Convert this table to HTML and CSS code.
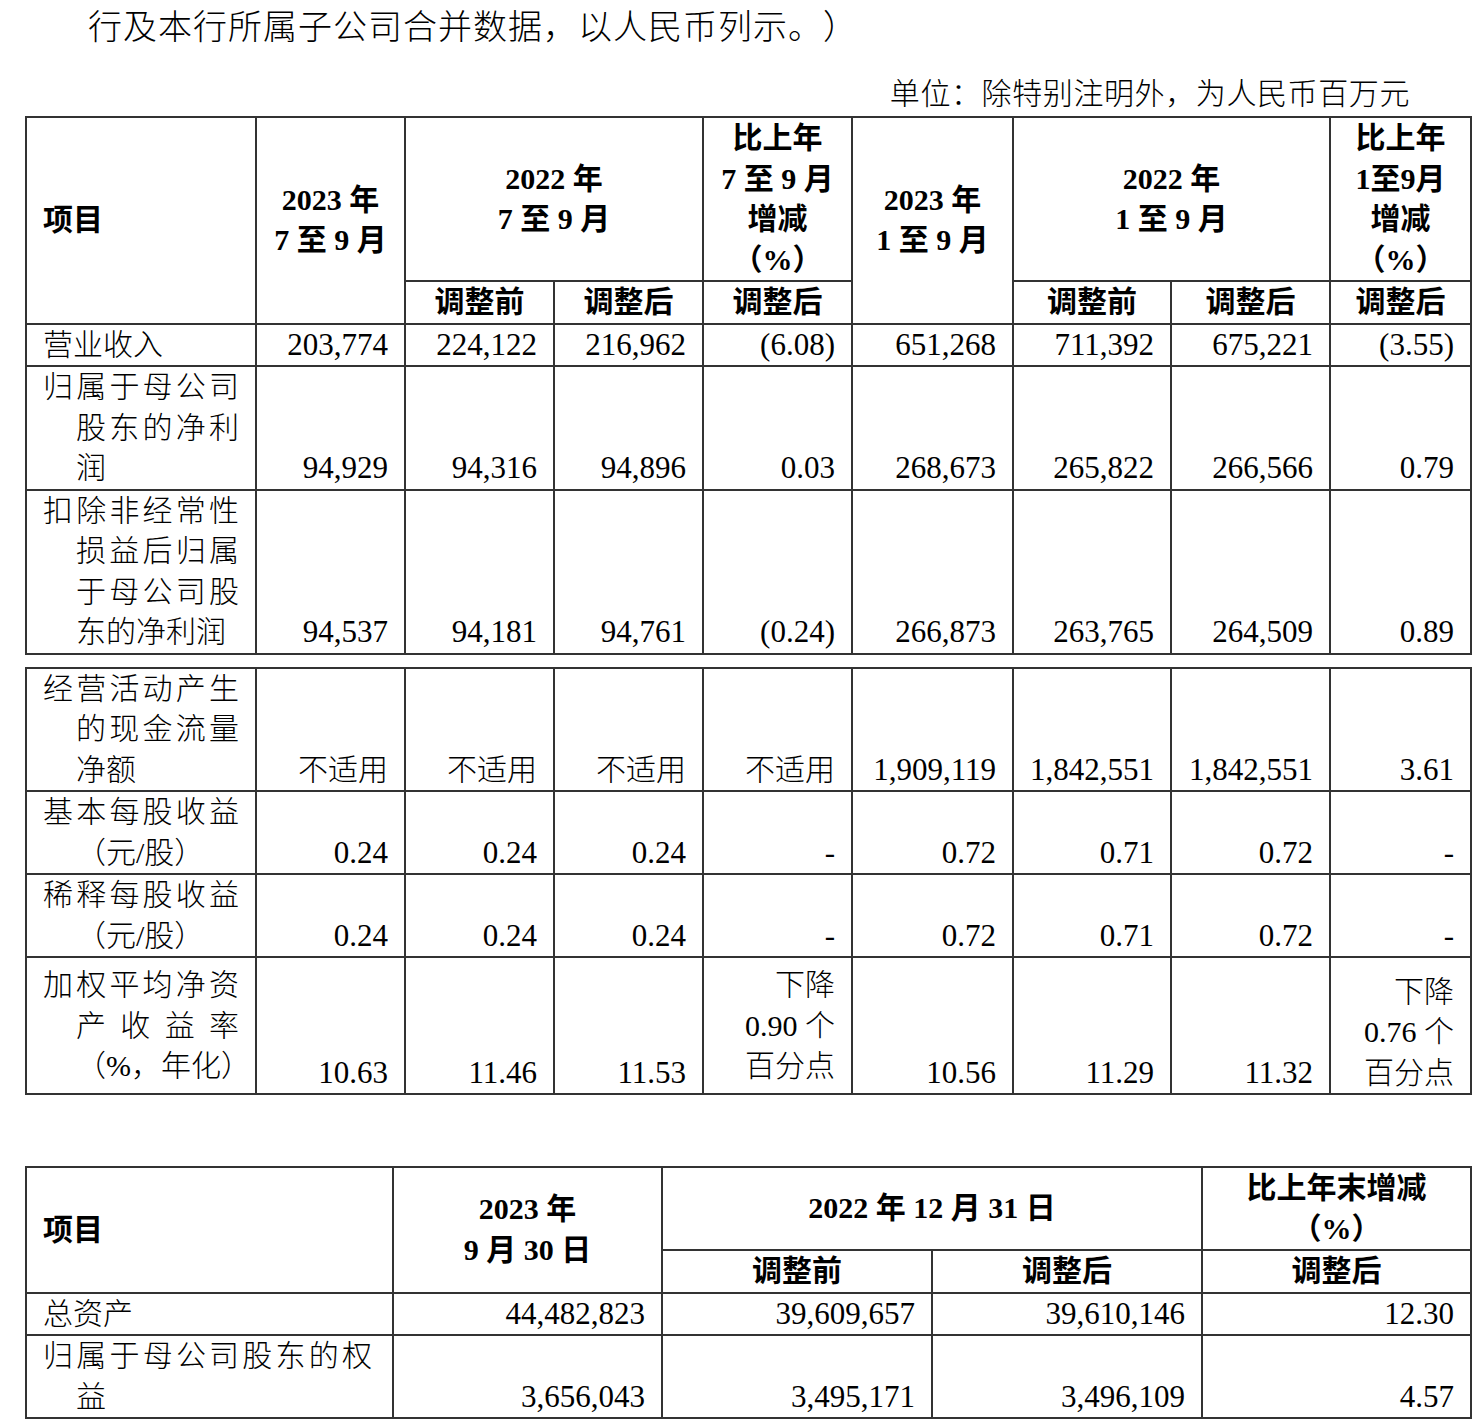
FILE: index.html
```html
<!DOCTYPE html>
<html lang="zh-CN">
<head>
<meta charset="utf-8">
<title>主要会计数据</title>
<link rel="stylesheet" href="styles.css">
</head>
<body>
<p class="lead">行及本行所属子公司合并数据，以人民币列示。）</p>
<p class="unit">单位：除特别注明外，为人民币百万元</p>

<table class="grid g1">
  <colgroup>
    <col class="c230"><col class="c149"><col class="c149"><col class="c149"><col class="c149"><col class="c161"><col class="c158"><col class="c159"><col class="c141">
  </colgroup>
  <tr>
    <th class="hleft" rowspan="2">项目</th>
    <th rowspan="2">2023 年<br>7 至 9 月</th>
    <th colspan="2">2022 年<br>7 至 9 月</th>
    <th>比上年<br>7 至 9 月<br>增减<br>（%）</th>
    <th rowspan="2">2023 年<br>1 至 9 月</th>
    <th colspan="2">2022 年<br>1 至 9 月</th>
    <th>比上年<br>1至9月<br>增减<br>（%）</th>
  </tr>
  <tr>
    <th>调整前</th><th>调整后</th><th>调整后</th><th>调整前</th><th>调整后</th><th>调整后</th>
  </tr>
  <tr>
    <td class="lbl">营业收入</td>
    <td class="n">203,774</td><td class="n">224,122</td><td class="n">216,962</td><td class="n">(6.08)</td>
    <td class="n">651,268</td><td class="n">711,392</td><td class="n">675,221</td><td class="n">(3.55)</td>
  </tr>
  <tr>
    <td class="lbl">归属于母公司股东的净利润</td>
    <td class="n">94,929</td><td class="n">94,316</td><td class="n">94,896</td><td class="n">0.03</td>
    <td class="n">268,673</td><td class="n">265,822</td><td class="n">266,566</td><td class="n">0.79</td>
  </tr>
  <tr>
    <td class="lbl">扣除非经常性损益后归属于母公司股东的净利润</td>
    <td class="n">94,537</td><td class="n">94,181</td><td class="n">94,761</td><td class="n">(0.24)</td>
    <td class="n">266,873</td><td class="n">263,765</td><td class="n">264,509</td><td class="n">0.89</td>
  </tr>
</table>

<table class="grid g2">
  <colgroup>
    <col class="c230"><col class="c149"><col class="c149"><col class="c149"><col class="c149"><col class="c161"><col class="c158"><col class="c159"><col class="c141">
  </colgroup>
  <tr>
    <td class="lbl">经营活动产生的现金流量净额</td>
    <td class="t">不适用</td><td class="t">不适用</td><td class="t">不适用</td><td class="t">不适用</td>
    <td class="n">1,909,119</td><td class="n">1,842,551</td><td class="n">1,842,551</td><td class="n">3.61</td>
  </tr>
  <tr>
    <td class="lbl">基本每股收益（元/股）</td>
    <td class="n">0.24</td><td class="n">0.24</td><td class="n">0.24</td><td class="n">-</td>
    <td class="n">0.72</td><td class="n">0.71</td><td class="n">0.72</td><td class="n">-</td>
  </tr>
  <tr>
    <td class="lbl">稀释每股收益（元/股）</td>
    <td class="n">0.24</td><td class="n">0.24</td><td class="n">0.24</td><td class="n">-</td>
    <td class="n">0.72</td><td class="n">0.71</td><td class="n">0.72</td><td class="n">-</td>
  </tr>
  <tr class="tall">
    <td class="lbl padtop">加权平均净资产收益率<span class="nw">（%，年化）</span></td>
    <td class="n">10.63</td><td class="n">11.46</td><td class="n">11.53</td>
    <td class="t padtop top">下降<br>0.90 个<br>百分点</td>
    <td class="n">10.56</td><td class="n">11.29</td><td class="n">11.32</td>
    <td class="t">下降<br>0.76 个<br>百分点</td>
  </tr>
</table>

<table class="grid g3">
  <colgroup>
    <col class="c367"><col class="c269"><col class="c270"><col class="c270"><col class="c269">
  </colgroup>
  <tr>
    <th class="hleft" rowspan="2">项目</th>
    <th rowspan="2">2023 年<br>9 月 30 日</th>
    <th colspan="2">2022 年 12 月 31 日</th>
    <th>比上年末增减<br>（%）</th>
  </tr>
  <tr>
    <th>调整前</th><th>调整后</th><th>调整后</th>
  </tr>
  <tr>
    <td class="lbl wide">总资产</td>
    <td class="n">44,482,823</td><td class="n">39,609,657</td><td class="n">39,610,146</td><td class="n">12.30</td>
  </tr>
  <tr>
    <td class="lbl wide">归属于母公司股东的权益</td>
    <td class="n">3,656,043</td><td class="n">3,495,171</td><td class="n">3,496,109</td><td class="n">4.57</td>
  </tr>
</table>
</body>
</html>
```
FILE: styles.css
```css
html, body {
  margin: 0;
  padding: 0;
  background: #ffffff;
}

body {
  width: 1481px;
  color: #000000;
  font-family: "Liberation Serif", "Noto Sans CJK SC", serif;
  font-size: 30px;
  font-weight: 200;
  text-spacing-trim: space-all;
}

.lead {
  margin: 0;
  padding-left: 88px;
  font-size: 34px;
  letter-spacing: 1px;
  line-height: 56px;
}

.unit {
  margin: 18px 71px 0 0;
  text-align: right;
  line-height: 40px;
  letter-spacing: 0.6px;
}

.grid {
  border-collapse: collapse;
  table-layout: fixed;
  width: 1445px;
  margin-left: 25px;
}

.g1 { margin-top: 2px; }
.g2 { margin-top: 12px; }
.g3 { margin-top: 71px; }

.c230 { width: 230px; }
.c149 { width: 149px; }
.c161 { width: 161px; }
.c158 { width: 158px; }
.c159 { width: 159px; }
.c141 { width: 141px; }
.c367 { width: 367px; }
.c269 { width: 269px; }
.c270 { width: 270px; }

.grid th,
.grid td {
  border: 2px solid #333333;
  padding: 0 16px;
  line-height: 40.5px;
}

.grid th {
  font-weight: 600;
  text-align: center;
  vertical-align: middle;
}

.grid th.hleft {
  text-align: left;
}

.grid td.lbl {
  text-align: justify;
  text-indent: -33px;
  padding-left: 49px;
  padding-right: 16px;
  vertical-align: top;
}

.grid td.lbl.wide {
  padding-right: 20px;
}

.grid td.n {
  text-align: right;
  vertical-align: bottom;
  font-size: 31px;
}

.grid td.t {
  text-align: right;
  vertical-align: bottom;
}

.grid td.top {
  vertical-align: top;
}

.grid td.padtop {
  padding-top: 7px;
}

.nw {
  white-space: nowrap;
}

.tall {
  height: 137px;
}
```
